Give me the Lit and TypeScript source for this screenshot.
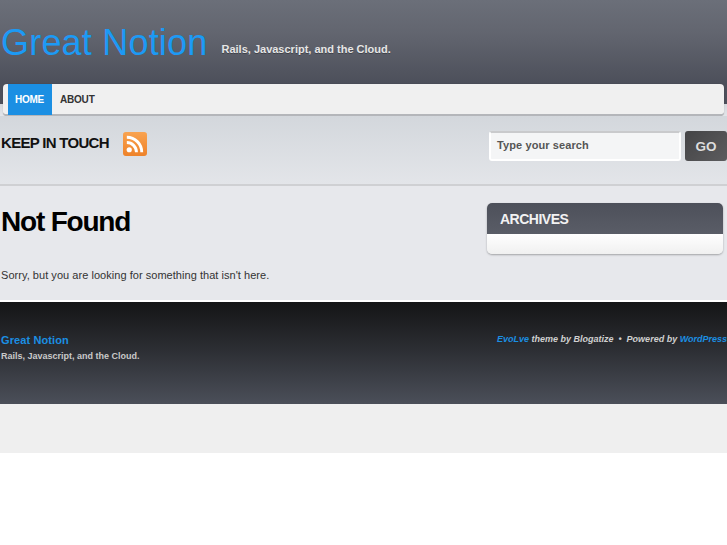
import { LitElement, html, css } from 'lit';
import { customElement } from 'lit/decorators.js';

@customElement('app-root')
export class AppRoot extends LitElement {
  static styles = css`
    :host {
      display: block;
      font-family: 'Liberation Sans', Arial, sans-serif;
      background: #fff;
      min-height: 545px;
      overflow: hidden;
    }
    a {
      text-decoration: none;
      color: inherit;
    }
    .header {
      height: 84px;
      box-sizing: border-box;
      padding: 22px 0 0 1px;
      display: flex;
      align-items: flex-start;
      gap: 14px;
      background: linear-gradient(#6b6f79, #62656f 40%, #4c4f5a);
    }
    .title {
      font-size: 36px;
      line-height: 42px;
      font-weight: 400;
      letter-spacing: 0.2px;
      color: #1c9af5;
    }
    .tagline {
      margin-top: 21px;
      font-size: 11px;
      line-height: 13px;
      font-weight: 700;
      color: #e6e6e6;
      text-shadow: 0 1px 0 rgba(0, 0, 0, 0.3);
    }
    .band {
      background: linear-gradient(#4c4f5a 0, #4c4f5a 20px, #d3d7dc 20px, #e3e5e9 100%);
      padding: 0 3px 0 3px;
    }
    .nav {
      height: 32px;
      box-sizing: border-box;
      display: flex;
      padding-left: 5px;
      background: #f0f0f0;
      border-radius: 4px;
      border-bottom: 2px solid #b4b6ba;
      box-shadow: 0 0 1px rgba(0, 0, 0, 0.3);
    }
    .nav a {
      height: 31px;
      display: flex;
      align-items: center;
      font-size: 10px;
      font-weight: 700;
      letter-spacing: -0.2px;
      color: #333;
      padding: 0 8px;
    }
    .nav a.current {
      background: #1b8fe3;
      color: #fff;
      width: 44px;
      box-sizing: border-box;
      justify-content: center;
      padding: 0 1px 0 0;
    }
    .subbar {
      height: 70px;
      box-sizing: border-box;
      display: flex;
      justify-content: space-between;
      padding: 15px 0 0 1px;
      background: linear-gradient(#d3d7dc, #e3e5e9);
      border-bottom: 2px solid #cfd0d3;
    }
    .touch {
      display: flex;
      align-items: flex-start;
      gap: 14px;
    }
    .touch h3 {
      margin: 1px 0 0;
      font-size: 15px;
      line-height: 22px;
      font-weight: 700;
      letter-spacing: -0.7px;
      color: #111;
    }
    .rss {
      display: block;
      margin-top: 1px;
    }
    .search {
      display: flex;
      align-items: flex-start;
      gap: 4px;
    }
    .search .input {
      width: 192px;
      height: 30px;
      box-sizing: border-box;
      padding: 0 0 2px 6px;
      display: flex;
      align-items: center;
      background: #f4f5f6;
      border: 2px solid #fff;
      border-top-color: #c9cacc;
      border-radius: 3px;
      font-size: 11px;
      font-weight: 700;
      color: #555;
      letter-spacing: 0.1px;
    }
    .search .go {
      width: 42px;
      height: 30px;
      display: flex;
      align-items: center;
      justify-content: center;
      background: linear-gradient(135deg, #444446, #5c5c5e);
      border-radius: 3px;
      font-size: 13.5px;
      font-weight: 700;
      color: #ddd;
    }
    .content {
      height: 114px;
      box-sizing: border-box;
      display: flex;
      justify-content: space-between;
      background: #e7e8ec;
    }
    .main {
      padding: 18px 0 0 1px;
    }
    .main h1 {
      margin: 0;
      font-size: 28px;
      line-height: 36px;
      font-weight: 700;
      letter-spacing: -1.2px;
      color: #000;
    }
    .main p {
      margin: 27px 0 0;
      font-size: 11px;
      line-height: 16px;
      letter-spacing: 0.04px;
      color: #333;
    }
    .widget {
      width: 236px;
      height: 51px;
      margin: 17px 4px 0 0;
      border-radius: 5px;
      overflow: hidden;
      background: linear-gradient(#fff 60%, #f0f0f0);
      box-shadow: 0 1px 2px rgba(0, 0, 0, 0.3);
    }
    .widget h3 {
      margin: 0;
      height: 31px;
      box-sizing: border-box;
      padding-left: 13px;
      display: flex;
      align-items: center;
      font-size: 14px;
      font-weight: 700;
      letter-spacing: -0.5px;
      color: #f2f2f2;
      background: linear-gradient(#4d505a, #5a5d67);
    }
    .footer {
      height: 102px;
      box-sizing: border-box;
      display: flex;
      justify-content: space-between;
      margin-top: 2px;
      padding: 30px 0 0 1px;
      background: linear-gradient(#141516, #2b2d32 45%, #4b4f59);
    }
    .footer h4 {
      margin: 1px 0 3px;
      font-size: 11px;
      line-height: 14px;
      font-weight: 700;
      color: #1b8fe3;
      letter-spacing: 0.1px;
    }
    .footer .tag {
      font-size: 9px;
      line-height: 12px;
      font-weight: 700;
      color: #c9c9c9;
    }
    .credits {
      font-size: 9px;
      line-height: 14px;
      font-weight: 700;
      font-style: italic;
      color: #d0d0d0;
      white-space: nowrap;
    }
    .credits a {
      color: #1b8fe3;
    }
    .bottom {
      height: 49px;
      background: #efefef;
    }
  `;

  render() {
    return html`
      <div class="header">
        <a class="title" href="#">Great Notion</a>
        <span class="tagline">Rails, Javascript, and the Cloud.</span>
      </div>
      <div class="band">
        <nav class="nav">
          <a class="current" href="#">HOME</a>
          <a href="#">ABOUT</a>
        </nav>
      </div>
      <div class="subbar">
        <div class="touch">
          <h3>KEEP IN TOUCH</h3>
          <svg class="rss" width="24" height="24" viewBox="0 0 25 25">
            <defs>
              <linearGradient id="rss-bg" x1="0" y1="0" x2="0" y2="1">
                <stop offset="0" stop-color="#f9a350" />
                <stop offset="1" stop-color="#ee8229" />
              </linearGradient>
            </defs>
            <rect x="0" y="0" width="25" height="25" rx="3" fill="url(#rss-bg)" />
            <circle cx="6.5" cy="18.5" r="2.7" fill="#fff" />
            <path d="M4 11a10 10 0 0 1 10 10" fill="none" stroke="#fff" stroke-width="3" />
            <path d="M4 5.5a15.5 15.5 0 0 1 15.5 15.5" fill="none" stroke="#fff" stroke-width="3" />
          </svg>
        </div>
        <div class="search">
          <div class="input">Type your search</div>
          <div class="go">GO</div>
        </div>
      </div>
      <div class="content">
        <div class="main">
          <h1>Not Found</h1>
          <p>Sorry, but you are looking for something that isn't here.</p>
        </div>
        <div class="widget"><h3>ARCHIVES</h3></div>
      </div>
      <div class="footer">
        <div>
          <h4>Great Notion</h4>
          <div class="tag">Rails, Javascript, and the Cloud.</div>
        </div>
        <div class="credits">
          <a href="#">EvoLve</a> theme by Blogatize &nbsp;•&nbsp; Powered by <a href="#">WordPress</a>
        </div>
      </div>
      <div class="bottom"></div>
    `;
  }
}
